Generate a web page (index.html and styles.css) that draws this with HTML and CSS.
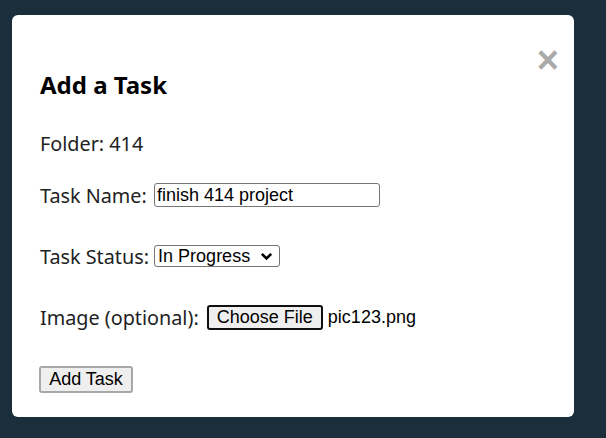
FILE: index.html
```html
<!DOCTYPE html>
<html>
<head>
<meta charset="utf-8">
<link rel="stylesheet" href="styles.css">
</head>
<body>
<div class="modal">
  <span class="close">&times;</span>
  <h2 class="title">Add a Task</h2>
  <div class="row r-folder">Folder: 414</div>
  <div class="row r-name">Task Name:&nbsp;<span class="input">finish 414 project</span></div>
  <div class="row r-status">Task Status:&nbsp;<span class="select">In Progress<svg class="chev" width="13" height="9" viewBox="0 0 13 9"><path d="M1.8 1.8 L6.5 6.5 L11.2 1.8" fill="none" stroke="#000" stroke-width="2.6"/></svg></span></div>
  <div class="row r-image">Image (optional):&nbsp;<span class="filebtn">Choose File</span><span class="fname">pic123.png</span></div>
  <div class="row r-add"><span class="addbtn">Add Task</span></div>
</div>
</body>
</html>
```
FILE: styles.css
```css
html, body { margin: 0; padding: 0; }
body {
  background: #1b2e3c;
  width: 606px;
  height: 438px;
  overflow: hidden;
  font-family: "Noto Sans", "Open Sans", sans-serif;
  color: #222;
}
.modal {
  position: relative;
  box-sizing: border-box;
  margin: 15px 0 0 12px;
  width: 562px;
  height: 402px;
  background: #fff;
  border-radius: 6px;
  padding: 55px 28px 0 28px;
  display: flex;
  flex-direction: column;
  align-items: flex-start;
}
.close {
  position: absolute;
  top: 26px;
  right: 15px;
  font-family: "Liberation Sans", Arial, sans-serif;
  font-size: 38px;
  font-weight: bold;
  line-height: 38px;
  color: #aaa;
}
.title {
  margin: 0;
  font-size: 24px;
  font-weight: bold;
  line-height: 30px;
  color: #000;
}
.row {
  display: flex;
  align-items: center;
  height: 30px;
  font-size: 19.8px;
  color: #222;
}
.r-folder { margin-top: 28px; }
.r-name { margin-top: 22px; }
.r-status { margin-top: 31px; }
.r-image { margin-top: 31px; }
.r-add { margin-top: 32px; }
.input {
  box-sizing: border-box;
  width: 226px;
  height: 24px;
  margin-left: 2px;
  border: 1px solid #767676;
  border-radius: 3px;
  padding: 0 2px;
  font-family: "Liberation Sans", Arial, sans-serif;
  font-size: 18px;
  line-height: 22px;
  color: #000;
}
.select {
  box-sizing: border-box;
  display: flex;
  align-items: center;
  justify-content: space-between;
  width: 126px;
  height: 22px;
  border: 1px solid #767676;
  border-radius: 3px;
  padding: 0 6px 0 3px;
  font-family: "Liberation Sans", Arial, sans-serif;
  font-size: 18px;
  color: #000;
}
.filebtn {
  box-sizing: border-box;
  display: flex;
  align-items: center;
  justify-content: center;
  width: 116px;
  height: 25px;
  margin-left: 3px;
  border: 2px solid #101010;
  border-radius: 3px;
  background: #efefef;
  font-family: "Liberation Sans", Arial, sans-serif;
  font-size: 18px;
  color: #000;
}
.fname {
  margin-left: 5px;
  font-family: "Liberation Sans", Arial, sans-serif;
  font-size: 18px;
  color: #000;
}
.addbtn {
  box-sizing: border-box;
  display: flex;
  align-items: center;
  justify-content: center;
  width: 94px;
  height: 27px;
  margin-left: -1px;
  border: 2px solid #a8a8a8;
  border-radius: 3px;
  background: #efefef;
  font-family: "Liberation Sans", Arial, sans-serif;
  font-size: 18px;
  color: #000;
}
```
